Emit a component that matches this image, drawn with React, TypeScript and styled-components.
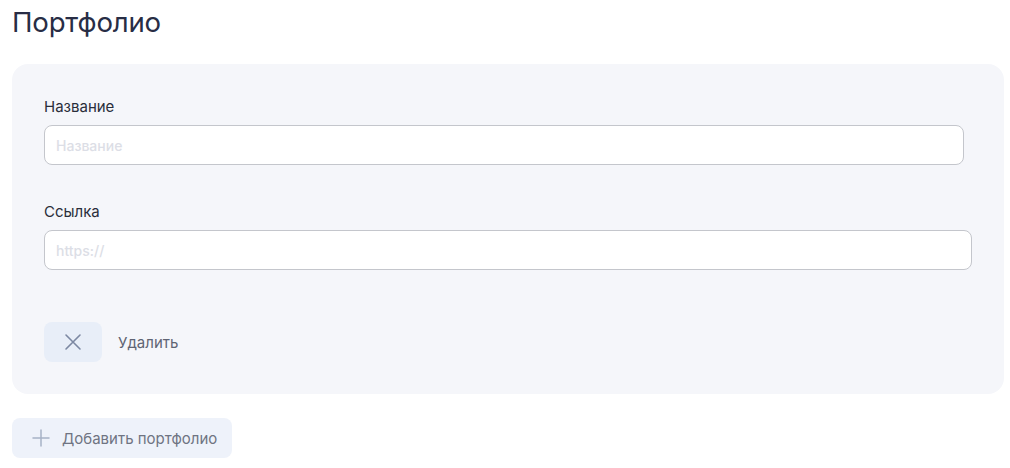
import React from "react";
import styled, { createGlobalStyle } from "styled-components";

const Global = createGlobalStyle`
  html, body { margin: 0; padding: 0; background: #ffffff; }
  body { font-family: Inter, "Noto Sans", sans-serif; -webkit-font-smoothing: antialiased; }
  * { box-sizing: border-box; }
`;

const Page = styled.div`
  padding: 4px 6px 0 12px;
  display: flex;
  flex-direction: column;
  align-items: flex-start;
`;

const Title = styled.h1`
  margin: 0;
  font-size: 27.6px;
  line-height: 36px;
  font-weight: 400;
  color: #282d45;
  letter-spacing: -0.2px;
`;

const Card = styled.section`
  align-self: stretch;
  margin-top: 24px;
  background: #f5f6fa;
  border-radius: 16px;
  padding: 33px 32px 32px 32px;
  display: flex;
  flex-direction: column;
`;

const Field = styled.div<{ $gap?: number }>`
  display: flex;
  flex-direction: column;
  gap: 8px;
  margin-top: ${(p) => p.$gap ?? 0}px;
`;

const Label = styled.label`
  font-size: 15px;
  line-height: 20px;
  color: #2a2e3a;
`;

const Input = styled.input<{ $inset?: number }>`
  height: 40px;
  margin-right: ${(p) => p.$inset ?? 0}px;
  border: 1px solid #c4c6cc;
  border-radius: 8px;
  background: #ffffff;
  padding: 0 11px;
  font-family: inherit;
  font-size: 14px;
  font-weight: 500;
  color: #2a2e3a;
  outline: none;
  &::placeholder { color: #dcdee6; }
`;

const Actions = styled.div`
  margin-top: 52px;
  display: flex;
  align-items: center;
  gap: 16px;
`;

const IconButton = styled.button`
  width: 58px;
  height: 40px;
  border: none;
  border-radius: 8px;
  background: #e8eef8;
  display: flex;
  align-items: center;
  justify-content: center;
  padding: 0;
  cursor: pointer;
`;

const ActionText = styled.span`
  font-size: 15px;
  color: #5f6473;
`;

const AddButton = styled.button`
  margin-top: 24px;
  height: 40px;
  width: 220px;
  border: none;
  border-radius: 8px;
  background: #eef2fa;
  display: flex;
  align-items: center;
  gap: 12px;
  padding: 0 0 0 20px;
  font-family: inherit;
  font-size: 15px;
  color: #6f7482;
  cursor: pointer;
`;

const CloseIcon = () => (
  <svg width="18" height="18" viewBox="0 0 18 18" fill="none">
    <path d="M2 2L16 16M16 2L2 16" stroke="#7c88a2" strokeWidth="1.6" strokeLinecap="round" />
  </svg>
);

const PlusIcon = () => (
  <svg width="18" height="18" viewBox="0 0 18 18" fill="none">
    <path d="M9 1V17M1 9H17" stroke="#a7b2c6" strokeWidth="1.5" strokeLinecap="round" />
  </svg>
);

export default function App() {
  return (
    <>
      <Global />
      <Page>
        <Title>Портфолио</Title>
        <Card>
          <Field>
            <Label>Название</Label>
            <Input placeholder="Название" $inset={8} />
          </Field>
          <Field $gap={37}>
            <Label>Ссылка</Label>
            <Input placeholder="https://" />
          </Field>
          <Actions>
            <IconButton aria-label="Удалить">
              <CloseIcon />
            </IconButton>
            <ActionText>Удалить</ActionText>
          </Actions>
        </Card>
        <AddButton>
          <PlusIcon />
          Добавить портфолио
        </AddButton>
      </Page>
    </>
  );
}
